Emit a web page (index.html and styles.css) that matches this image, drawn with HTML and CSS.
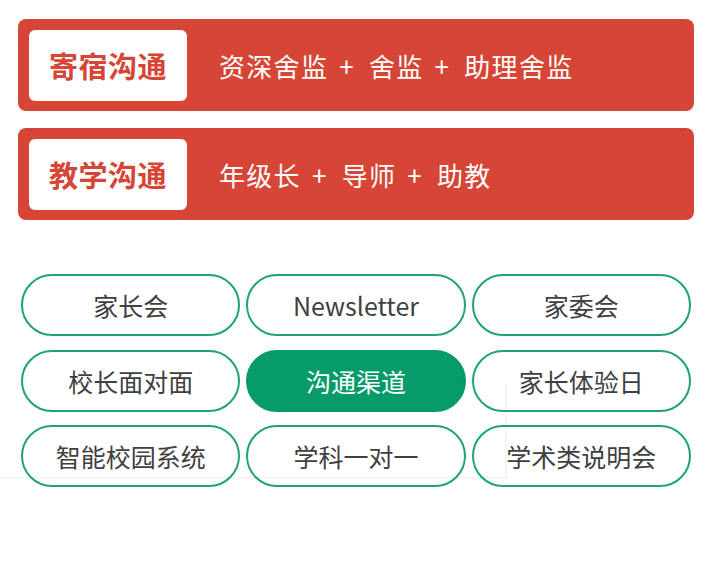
FILE: index.html
```html
<!DOCTYPE html>
<html lang="zh-CN">
  <head>
    <meta charset="UTF-8" />
    <meta name="viewport" content="width=device-width, initial-scale=1.0" />
    <title>家校沟通</title>
    <link rel="stylesheet" href="styles.css">
  </head>
  <body>
    <div class="page">
      <div class="bar">
        <div class="bar-label">寄宿沟通</div>
        <div class="bar-text">资深舍监<span class="plus">+</span>舍监<span class="plus">+</span>助理舍监</div>
      </div>
      <div class="bar">
        <div class="bar-label">教学沟通</div>
        <div class="bar-text">年级长<span class="plus">+</span>导师<span class="plus">+</span>助教</div>
      </div>

      <div class="channels">
        <div class="pill">家长会</div>
        <div class="pill">Newsletter</div>
        <div class="pill">家委会</div>
        <div class="pill">校长面对面</div>
        <div class="pill active">沟通渠道</div>
        <div class="pill">家长体验日</div>
        <div class="pill">智能校园系统</div>
        <div class="pill">学科一对一</div>
        <div class="pill">学术类说明会</div>
      </div>
      <div class="ghost"></div>
    </div>
  </body>
</html>
```

FILE: styles.css
```css
body {
  margin: 0;
  background: #fff;
  font-family: "Noto Sans CJK SC", "Noto Sans", sans-serif;
}
.page {
  position: relative;
  padding: 19px 21px 0 18px;
}
.bar {
  display: flex;
  align-items: center;
  height: 92px;
  padding: 0 11px;
  margin-bottom: 17px;
  border-radius: 8px;
  background-color: #d64535;
}
.bar-label {
  width: 158px;
  height: 71px;
  line-height: 71px;
  border-radius: 6px;
  background-color: #fff;
  color: #d64535;
  font-size: 29px;
  font-weight: bold;
  text-align: center;
  letter-spacing: 0.5px;
}
.bar-text {
  margin-left: 32px;
  color: #fff;
  font-size: 26px;
  letter-spacing: 1.3px;
}
.bar-text .plus {
  display: inline-block;
  margin: 0 14px 0 11px;
  font-size: 26px;
}
.channels {
  display: grid;
  grid-template-columns: repeat(3, 1fr);
  column-gap: 6px;
  row-gap: 13.5px;
  margin: 54px 3px 0 3px;
}
.pill {
  height: 62px;
  box-sizing: border-box;
  border: 2px solid #1fa374;
  border-radius: 31px;
  display: flex;
  align-items: center;
  justify-content: center;
  color: #404040;
  font-size: 25px;
}
.pill.active {
  background-color: #079b6b;
  border-color: #079b6b;
  color: #fff;
}
.ghost {
  position: absolute;
  left: 0;
  top: 384px;
  width: 505px;
  height: 93px;
  border-right: 1px solid rgba(0, 0, 0, 0.06);
  border-bottom: 1px solid rgba(0, 0, 0, 0.06);
  box-shadow: 1px 1px 2px rgba(0, 0, 0, 0.04);
  pointer-events: none;
}
```
